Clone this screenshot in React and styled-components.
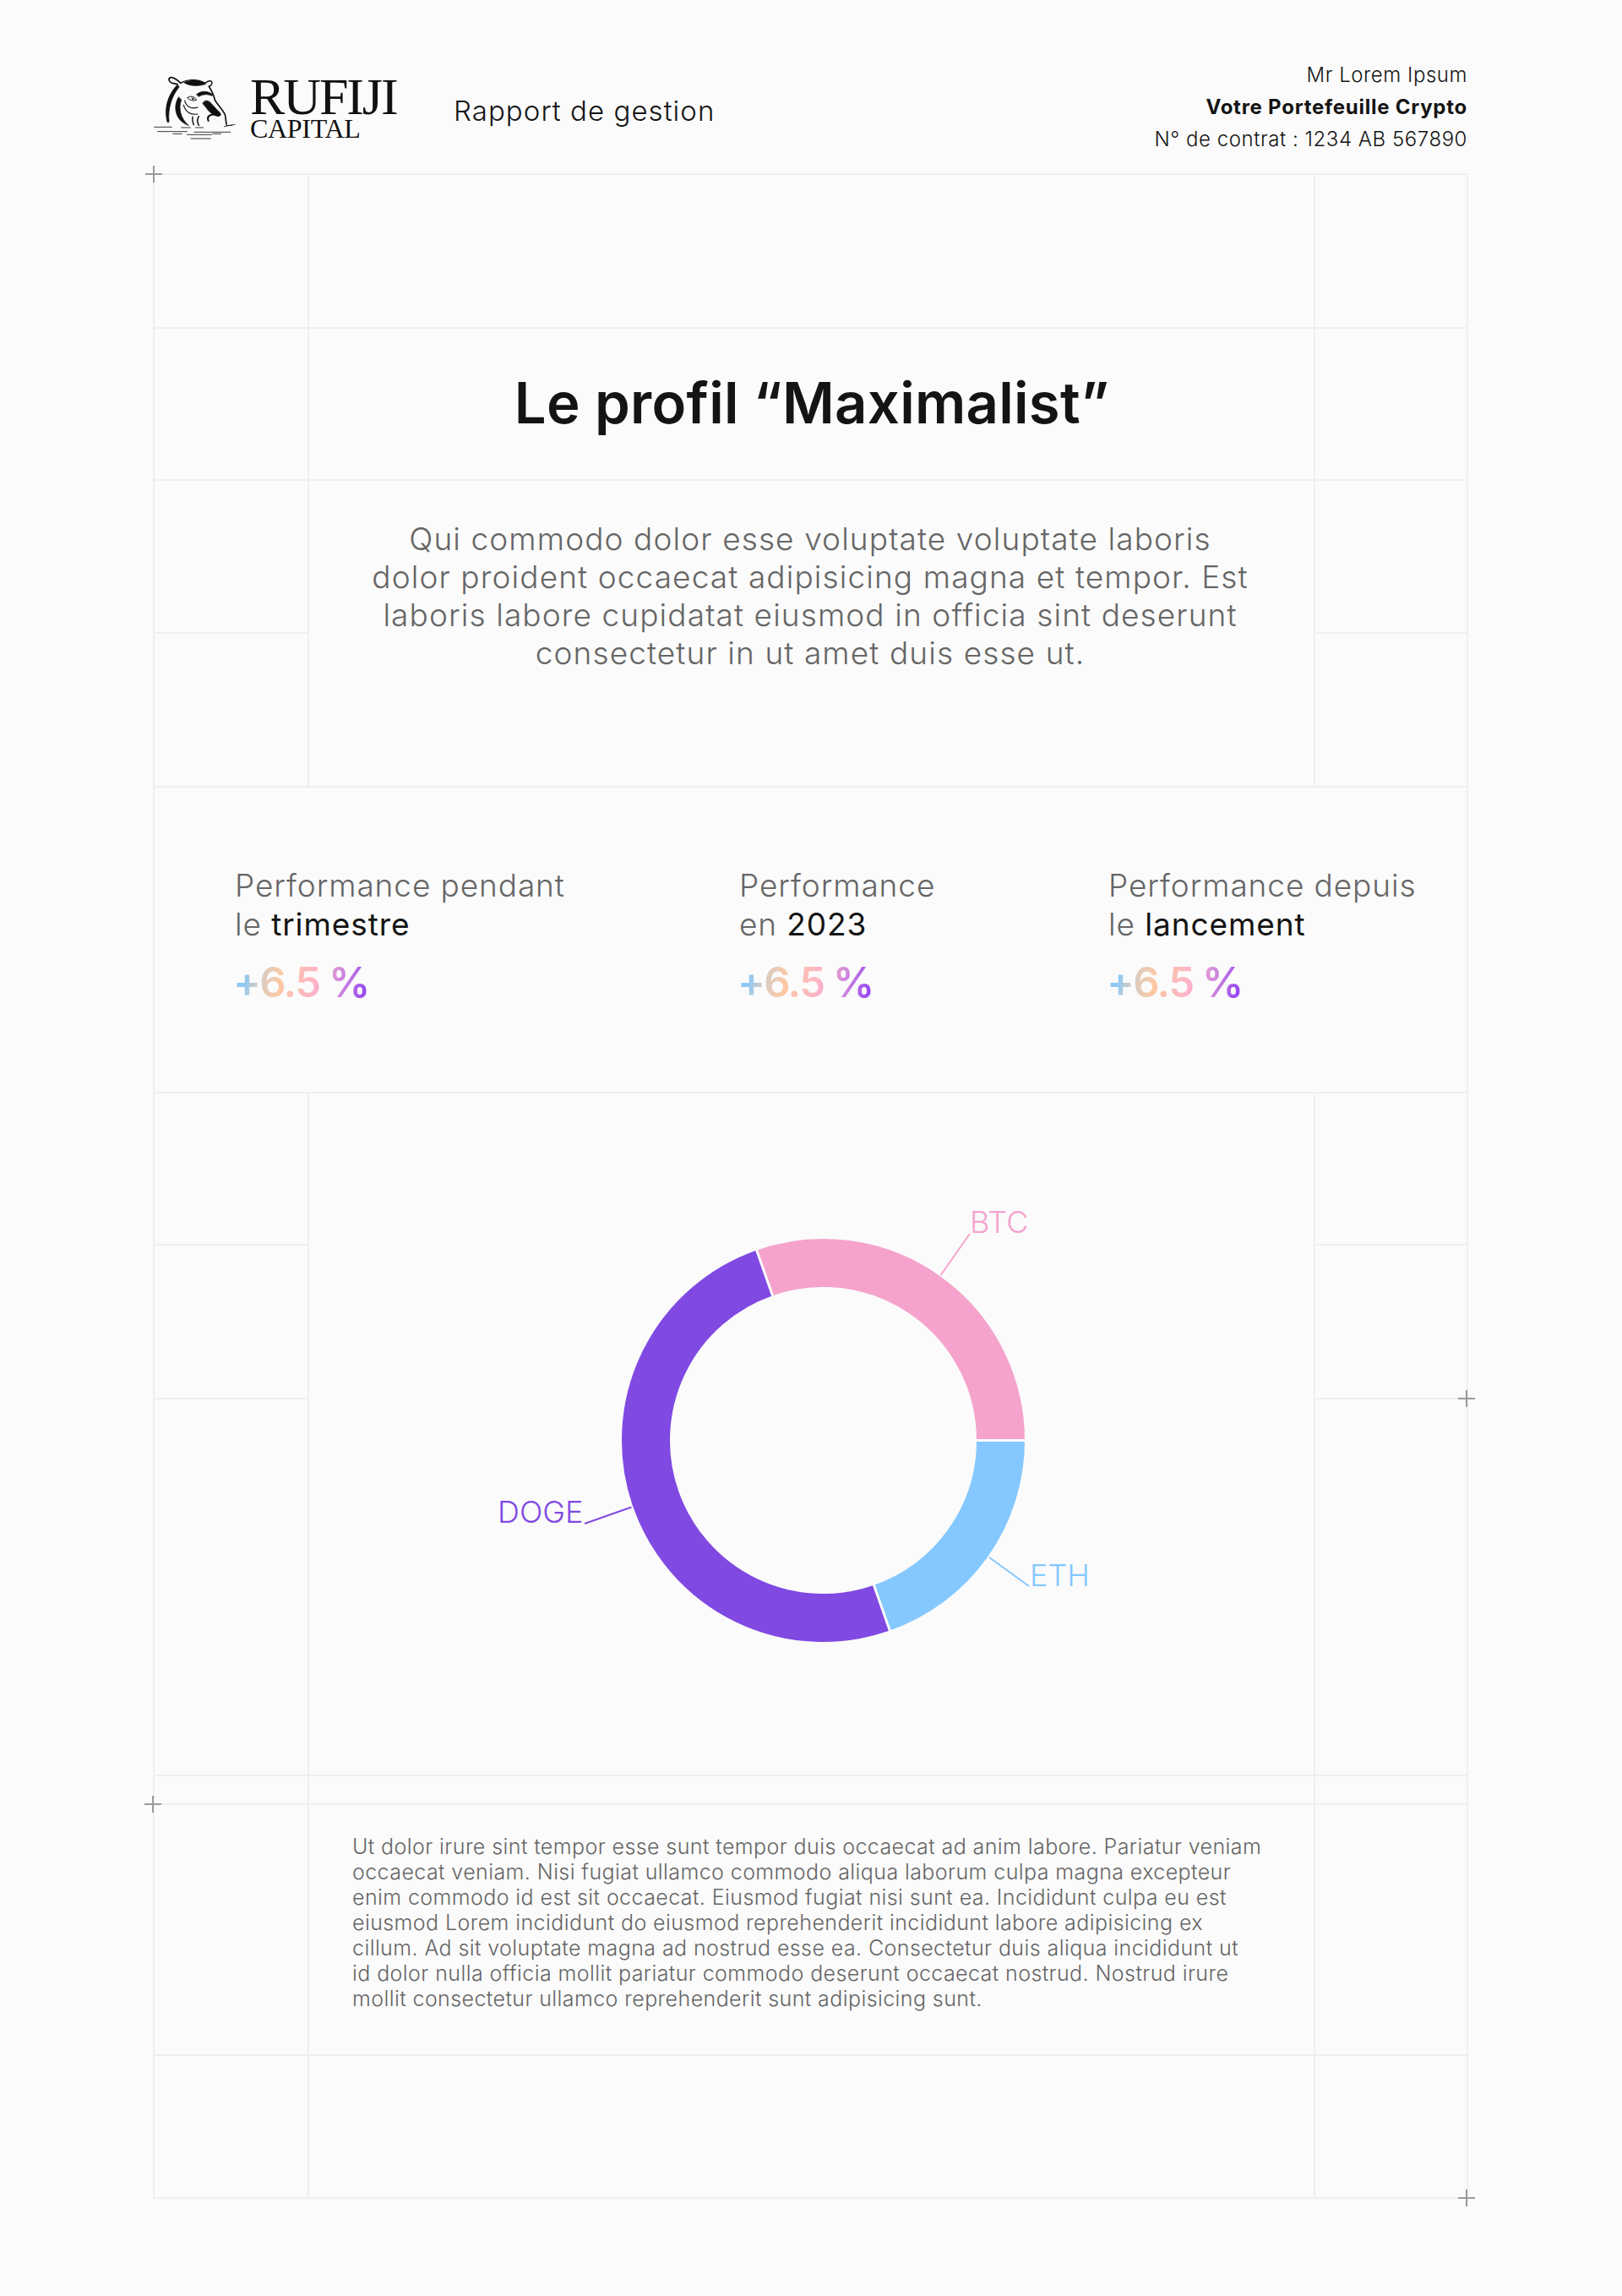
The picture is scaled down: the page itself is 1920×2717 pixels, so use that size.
import styled, { createGlobalStyle } from "styled-components";

const GlobalStyle = createGlobalStyle`
  html, body {
    margin: 0;
    padding: 0;
    background: #fbfbfb;
  }
  * {
    box-sizing: border-box;
  }
`;

const LINE = "#efefef";

const Page = styled.div`
  width: 1920px;
  height: 2717px;
  background: #fbfbfb;
  color: #141414;
  font-family: Inter, "Liberation Sans", sans-serif;
`;

const Header = styled.header`
  height: 205px;
  padding: 0 183px 0 178px;
  display: flex;
  justify-content: space-between;
  align-items: flex-start;
`;

const Brand = styled.div`
  display: flex;
  align-items: flex-start;
  padding-top: 85px;
`;

const Wordmark = styled.div`
  margin-left: 8px;
  width: 241px;
  padding-top: 2px;
  font-family: "Liberation Serif", serif;
  color: #111;
`;

const WordmarkTop = styled.div`
  font-size: 62px;
  line-height: 54px;
  letter-spacing: -2.1px;
  white-space: nowrap;
`;

const WordmarkBottom = styled.div`
  font-size: 32px;
  line-height: 22px;
  letter-spacing: -0.3px;
  white-space: nowrap;
`;

const ReportTitle = styled.div`
  font-size: 33px;
  font-weight: 300;
  line-height: 40px;
  letter-spacing: 1.05px;
  padding-top: 26px;
  white-space: nowrap;
`;

const ClientInfo = styled.div`
  padding-top: 70px;
  text-align: right;
  font-size: 24px;
  font-weight: 300;
  line-height: 38px;
  letter-spacing: 0.55px;
  white-space: nowrap;
`;

const ClientStrong = styled.div`
  font-weight: 700;
  letter-spacing: 0.75px;
`;

const Sheet = styled.main`
  position: relative;
  width: 1557px;
  margin-left: 181px;
  border: 2px solid ${LINE};
  border-bottom: 0;
`;

const Band = styled.section`
  display: grid;
  grid-template-columns: 183px 1fr 181px;
  grid-template-rows: ${(props) => props.$rows};
`;

const Cell = styled.div`
  grid-column: ${(props) => props.$col};
  grid-row: ${(props) => props.$row};
  border-bottom: 2px solid ${LINE};
  border-right: ${(props) => (props.$col === 1 ? `2px solid ${LINE}` : "0")};
  border-left: ${(props) => (props.$col === 3 ? `2px solid ${LINE}` : "0")};
`;

const TitleCell = styled(Cell)`
  display: flex;
  align-items: center;
  justify-content: center;
`;

const Title = styled.h1`
  margin: 0 0 3px 1px;
  font-size: 67px;
  font-weight: 600;
  letter-spacing: 0.25px;
  white-space: nowrap;
`;

const IntroCell = styled(Cell)`
  padding: 46px 3px 0 0;
  text-align: center;
  font-size: 37px;
  font-weight: 300;
  line-height: 45px;
  letter-spacing: 1.1px;
  color: #666;
  white-space: nowrap;
`;

const Stats = styled.section`
  height: 362px;
  padding: 93px 0 0 95px;
  display: grid;
  grid-template-columns: 597px 437px 1fr;
  align-content: start;
  border-bottom: 2px solid ${LINE};
`;

const StatLabel = styled.div`
  font-size: 37px;
  font-weight: 300;
  line-height: 46px;
  letter-spacing: 0.9px;
  color: #666;
  white-space: nowrap;
`;

const StatEmphasis = styled.span`
  font-weight: 400;
  color: #141414;
`;

const StatValue = styled.div`
  display: inline-block;
  margin: 16px 0 0 -2px;
  font-size: 49px;
  font-weight: 600;
  line-height: 60px;
  letter-spacing: -1.6px;
  color: transparent;
  background: linear-gradient(100deg, #86c8f8 0%, #8fc9f3 11%, #d4cdc6 20%, #fcc8a4 36%, #ffb3c8 60%, #cd86dd 78%, #8a38f6 100%);
  -webkit-background-clip: text;
  background-clip: text;
`;

const ChartCell = styled(Cell)`
  padding: 106px 0 0 194px;
`;

const ChartSvg = styled.svg`
  display: block;
`;

const ChartLabel = styled.text`
  font-family: Inter, "Liberation Sans", sans-serif;
  font-size: 36px;
  font-weight: 300;
`;

const NoteCell = styled(Cell)`
  padding: 34px 0 0 51px;
  font-size: 25px;
  font-weight: 300;
  line-height: 30px;
  letter-spacing: 0.41px;
  color: #666;
  white-space: nowrap;
`;

const Cross = styled.span`
  position: absolute;
  left: ${(props) => props.$x}px;
  top: ${(props) => props.$y}px;
  width: 20px;
  height: 20px;
  background:
    linear-gradient(#9a9a9a, #9a9a9a) center / 100% 2px no-repeat,
    linear-gradient(#9a9a9a, #9a9a9a) center / 2px 100% no-repeat;
`;

const HippoLogo = () => (
  <svg width="110" height="85" viewBox="0 0 330 255" fill="none" stroke="#111" strokeLinecap="round" strokeLinejoin="round">
    <path d="M108 40C95 28 82 18 72 20C62 23 65 36 78 40L96 44" strokeWidth="5" />
    <path d="M108 40C125 28 165 22 195 40C205 30 218 30 219 38C219 45 212 50 208 52" strokeWidth="4" />
    <path d="M120 38C140 27 178 27 197 43C172 53 136 51 120 38Z" fill="#111" strokeWidth="2" />
    <path d="M96 46C68 74 46 122 60 178C63 182 66 180 66 174C62 130 76 86 102 54Z" fill="#111" strokeWidth="2" />
    <path d="M100 90C80 122 86 172 136 191C108 166 98 130 110 100Z" fill="#111" strokeWidth="2" />
    <path d="M164 80C182 65 206 68 220 80C222 84 220 86 216 84C200 78 184 80 172 88Z" fill="#111" strokeWidth="2" />
    <path d="M208 52C216 64 226 88 230 102C240 118 258 136 265 152C268 164 268 176 270 186" strokeWidth="5" />
    <path d="M186 112C190 100 204 100 212 108L248 146C252 152 250 157 240 157C230 157 220 150 210 142Z" fill="#111" strokeWidth="2" />
    <path d="M242 156C220 146 198 154 206 174" strokeWidth="6" />
    <path d="M132 92C140 84 156 86 164 100C152 104 140 102 132 92Z" strokeWidth="3" />
    <path d="M146 92C150 90 156 94 156 99C150 100 146 97 146 92Z" fill="#333" stroke="none" />
    <path d="M122 102C126 122 144 134 168 126M118 118C124 142 144 154 168 150" strokeWidth="3.5" />
    <path d="M150 160C148 170 150 180 154 188M172 158C166 168 166 180 172 190" strokeWidth="4.5" />
    <path d="M14 196H76M110 198H142M160 198H188M262 194L300 187M270 190H290" strokeWidth="2.5" />
    <path d="M26 212H130M156 214H284M80 220H112M130 223H218M222 220H250M144 237H214" strokeWidth="2.5" />
  </svg>
);

const CX = 974.5;
const CY = 1704.5;
const RADIUS = 210;

const point = (angle, radius) => {
  const rad = (angle * Math.PI) / 180;
  return [CX + radius * Math.cos(rad), CY + radius * Math.sin(rad)];
};

const slices = [
  { from: -109.3, to: 0, color: "#f5a3cd" },
  { from: 0, to: 70.7, color: "#85c8ff" },
  { from: 70.7, to: 250.7, color: "#8049e2" },
];

const labels = [
  { text: "BTC", x: 1148, y: 1459, color: "#f5a3cd", line: "M1148 1460L1113.5 1509" },
  { text: "ETH", x: 1219, y: 1877, color: "#85c8ff", line: "M1171 1843L1218 1877" },
  { text: "DOGE", x: 589, y: 1802, color: "#8049e2", line: "M692 1803L747.5 1783.5" },
];

const Donut = () => (
  <ChartSvg width="760" height="580" viewBox="560 1400 760 580" fill="none">
    {slices.map((s) => {
      const [x1, y1] = point(s.from, RADIUS);
      const [x2, y2] = point(s.to, RADIUS);
      const large = s.to - s.from > 180 ? 1 : 0;
      return (
        <path
          key={s.color}
          d={`M${x1} ${y1}A${RADIUS} ${RADIUS} 0 ${large} 1 ${x2} ${y2}`}
          stroke={s.color}
          strokeWidth="57"
        />
      );
    })}
    {slices.map((s) => {
      const [x1, y1] = point(s.from, RADIUS - 30);
      const [x2, y2] = point(s.from, RADIUS + 30);
      return <line key={s.from} x1={x1} y1={y1} x2={x2} y2={y2} stroke="#fbfbfb" strokeWidth="3" />;
    })}
    {labels.map((l) => (
      <g key={l.text}>
        <path d={l.line} stroke={l.color} strokeWidth="2" />
        <ChartLabel x={l.x} y={l.y} fill={l.color}>
          {l.text}
        </ChartLabel>
      </g>
    ))}
  </ChartSvg>
);

const stats = [
  { first: "Performance pendant", lead: "le ", strong: "trimestre" },
  { first: "Performance", lead: "en ", strong: "2023" },
  { first: "Performance depuis", lead: "le ", strong: "lancement" },
];

const App = () => (
  <Page>
    <GlobalStyle />
    <Header>
      <Brand>
        <HippoLogo />
        <Wordmark>
          <WordmarkTop>RUFIJI</WordmarkTop>
          <WordmarkBottom>CAPITAL</WordmarkBottom>
        </Wordmark>
        <ReportTitle>Rapport de gestion</ReportTitle>
      </Brand>
      <ClientInfo>
        <div>Mr Lorem Ipsum</div>
        <ClientStrong>Votre Portefeuille Crypto</ClientStrong>
        <div>N° de contrat : 1234 AB 567890</div>
      </ClientInfo>
    </Header>

    <Sheet>
      <Band $rows="182px 180px 181px 182px">
        <Cell $col={1} $row={1} />
        <Cell $col={2} $row={1} />
        <Cell $col={3} $row={1} />
        <Cell $col={1} $row={2} />
        <TitleCell $col={2} $row={2}>
          <Title>Le profil “Maximalist”</Title>
        </TitleCell>
        <Cell $col={3} $row={2} />
        <Cell $col={1} $row={3} />
        <IntroCell $col={2} $row="3 / span 2">
          Qui commodo dolor esse voluptate voluptate laboris
          <br />
          dolor proident occaecat adipisicing magna et tempor. Est
          <br />
          laboris labore cupidatat eiusmod in officia sint deserunt
          <br />
          consectetur in ut amet duis esse ut.
        </IntroCell>
        <Cell $col={3} $row={3} />
        <Cell $col={1} $row={4} />
        <Cell $col={3} $row={4} />
      </Band>

      <Stats>
        {stats.map((s) => (
          <div key={s.first}>
            <StatLabel>
              {s.first}
              <br />
              {s.lead}
              <StatEmphasis>{s.strong}</StatEmphasis>
            </StatLabel>
            <StatValue>+6.5 %</StatValue>
          </div>
        ))}
      </Stats>

      <Band $rows="180px 182px 446px">
        <Cell $col={1} $row={1} />
        <ChartCell $col={2} $row="1 / span 3">
          <Donut />
        </ChartCell>
        <Cell $col={3} $row={1} />
        <Cell $col={1} $row={2} />
        <Cell $col={3} $row={2} />
        <Cell $col={1} $row={3} />
        <Cell $col={3} $row={3} />
      </Band>

      <Band $rows="34px 297px 169px">
        <Cell $col={1} $row={1} />
        <Cell $col={2} $row={1} />
        <Cell $col={3} $row={1} />
        <Cell $col={1} $row={2} />
        <NoteCell $col={2} $row={2}>
          Ut dolor irure sint tempor esse sunt tempor duis occaecat ad anim labore. Pariatur veniam
          <br />
          occaecat veniam. Nisi fugiat ullamco commodo aliqua laborum culpa magna excepteur
          <br />
          enim commodo id est sit occaecat. Eiusmod fugiat nisi sunt ea. Incididunt culpa eu est
          <br />
          eiusmod Lorem incididunt do eiusmod reprehenderit incididunt labore adipisicing ex
          <br />
          cillum. Ad sit voluptate magna ad nostrud esse ea. Consectetur duis aliqua incididunt ut
          <br />
          id dolor nulla officia mollit pariatur commodo deserunt occaecat nostrud. Nostrud irure
          <br />
          mollit consectetur ullamco reprehenderit sunt adipisicing sunt.
        </NoteCell>
        <Cell $col={3} $row={2} />
        <Cell $col={1} $row={3} />
        <Cell $col={2} $row={3} />
        <Cell $col={3} $row={3} />
      </Band>

      <Cross $x={-11} $y={-11} />
      <Cross $x={1543} $y={1438} />
      <Cross $x={-12} $y={1918} />
      <Cross $x={1543} $y={2384} />
    </Sheet>
  </Page>
);

export default App;
